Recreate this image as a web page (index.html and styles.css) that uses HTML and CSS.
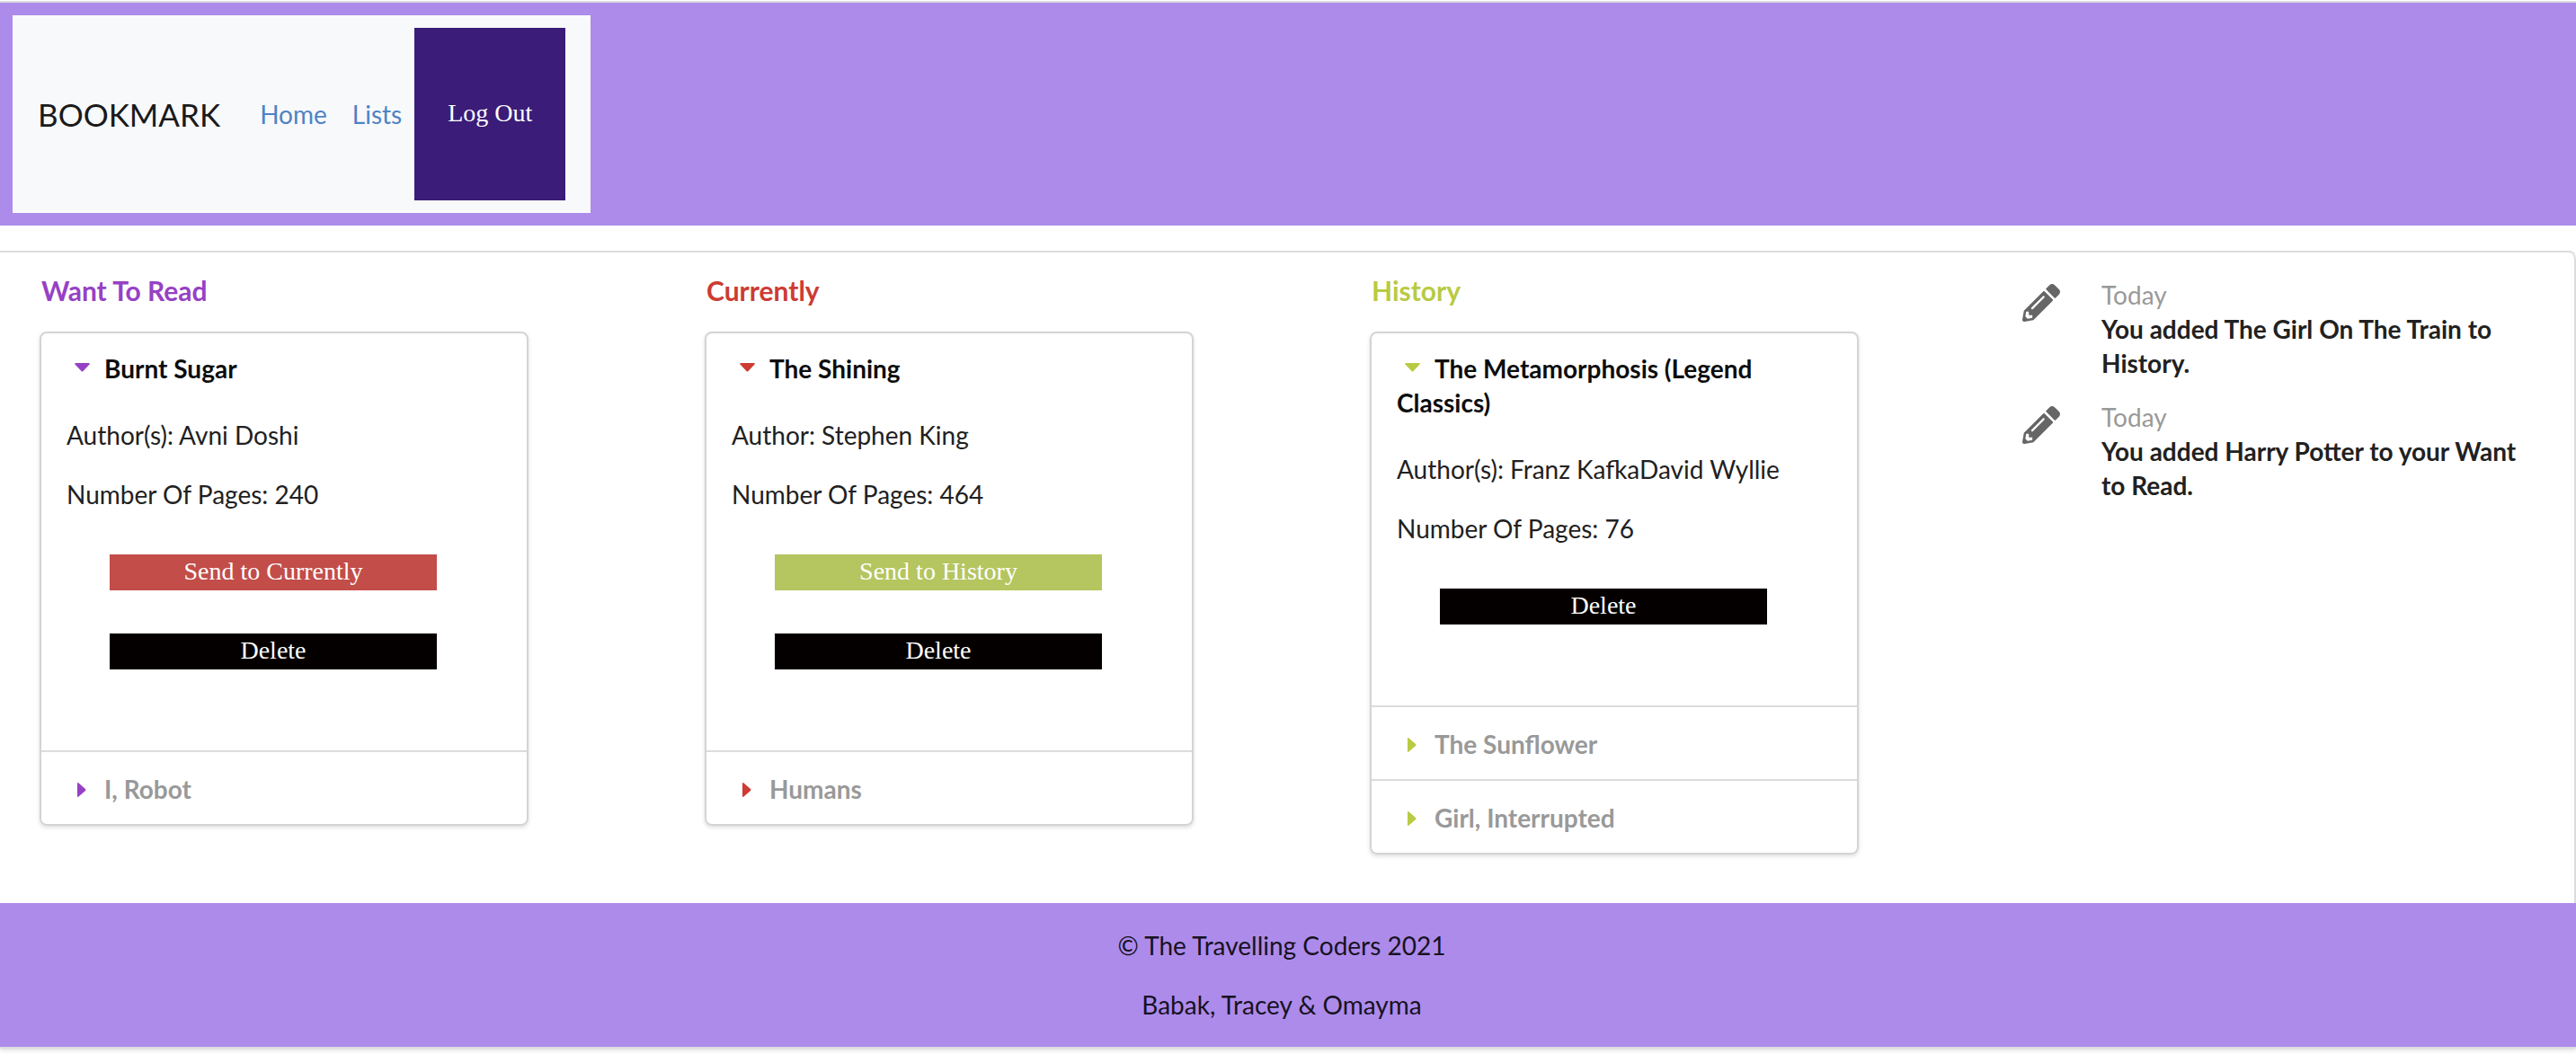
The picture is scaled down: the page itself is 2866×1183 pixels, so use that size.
FILE: index.html
```html
<!DOCTYPE html>
<html lang="en">
<head>
  <meta charset="utf-8">
  <meta name="viewport" content="width=device-width, initial-scale=1">
  <title>Bookmark</title>
  <link rel="stylesheet" href="styles.css">
</head>
<body>
  <header class="site-header">
    <nav class="navbar">
      <span class="brand">BOOKMARK</span>
      <a class="nav-link" href="#home">Home</a>
      <a class="nav-link" href="#lists">Lists</a>
      <button class="logout" type="button">Log Out</button>
    </nav>
  </header>

  <div class="page">
    <main class="content">
      <div class="lists">
        <section class="list list-want">
          <h2 class="list-heading">Want To Read</h2>
          <div class="accordion">
            <details class="book" open>
              <summary class="book-title"><svg class="caret" viewBox="0 0 35 20" aria-hidden="true"><path d="M10 3h15q1.500 0 .5 1.500l-7 7.500q-1 1-2 0l-7-7.500q-1-1.500.5-1.500z"/></svg>Burnt Sugar</summary>
              <div class="book-body">
                <p>Author(s): Avni Doshi</p>
                <p>Number Of Pages: 240</p>
                <button class="action action-currently" type="button">Send to Currently</button>
                <button class="action action-delete" type="button">Delete</button>
              </div>
            </details>
            <details class="book">
              <summary class="book-title"><svg class="caret" viewBox="0 0 35 20" aria-hidden="true"><path d="M12 3v14q0 1.500 1.500.5l7.500-6.500q1-1 0-2l-7.500-6.500q-1.500-1-1.500.5z"/></svg>I, Robot</summary>
            </details>
          </div>
        </section>

        <section class="list list-currently">
          <h2 class="list-heading">Currently</h2>
          <div class="accordion">
            <details class="book" open>
              <summary class="book-title"><svg class="caret" viewBox="0 0 35 20" aria-hidden="true"><path d="M10 3h15q1.500 0 .5 1.500l-7 7.500q-1 1-2 0l-7-7.500q-1-1.500.5-1.500z"/></svg>The Shining</summary>
              <div class="book-body">
                <p>Author: Stephen King</p>
                <p>Number Of Pages: 464</p>
                <button class="action action-history" type="button">Send to History</button>
                <button class="action action-delete" type="button">Delete</button>
              </div>
            </details>
            <details class="book">
              <summary class="book-title"><svg class="caret" viewBox="0 0 35 20" aria-hidden="true"><path d="M12 3v14q0 1.500 1.500.5l7.500-6.500q1-1 0-2l-7.500-6.500q-1.500-1-1.500.5z"/></svg>Humans</summary>
            </details>
          </div>
        </section>

        <section class="list list-history">
          <h2 class="list-heading">History</h2>
          <div class="accordion">
            <details class="book" open>
              <summary class="book-title"><svg class="caret" viewBox="0 0 35 20" aria-hidden="true"><path d="M10 3h15q1.500 0 .5 1.500l-7 7.500q-1 1-2 0l-7-7.500q-1-1.500.5-1.500z"/></svg>The Metamorphosis (Legend Classics)</summary>
              <div class="book-body">
                <p>Author(s): Franz KafkaDavid Wyllie</p>
                <p>Number Of Pages: 76</p>
                <button class="action action-delete" type="button">Delete</button>
              </div>
            </details>
            <details class="book">
              <summary class="book-title"><svg class="caret" viewBox="0 0 35 20" aria-hidden="true"><path d="M12 3v14q0 1.500 1.500.5l7.500-6.500q1-1 0-2l-7.500-6.500q-1.500-1-1.500.5z"/></svg>The Sunflower</summary>
            </details>
            <details class="book">
              <summary class="book-title"><svg class="caret" viewBox="0 0 35 20" aria-hidden="true"><path d="M12 3v14q0 1.500 1.500.5l7.500-6.500q1-1 0-2l-7.500-6.500q-1.500-1-1.500.5z"/></svg>Girl, Interrupted</summary>
            </details>
          </div>
        </section>
      </div>

      <aside class="feed">
        <article class="event">
          <svg class="pencil" viewBox="0 0 512 512" aria-hidden="true"><path d="M497.900 142.100l-46.100 46.100c-4.700 4.700-12.300 4.700-17 0l-111-111c-4.700-4.700-4.700-12.300 0-17l46.100-46.100c18.700-18.700 49.100-18.700 67.900 0l60.100 60.100c18.800 18.700 18.800 49.100 0 67.900zM284.200 99.800L21.600 362.400.4 483.900c-2.900 16.400 11.400 30.600 27.800 27.800l121.500-21.300 262.600-262.600c4.700-4.700 4.700-12.300 0-17l-111-111c-4.800-4.700-12.400-4.700-17.100 0zM124.100 339.900c-5.500-5.500-5.500-14.300 0-19.800l154-154c5.500-5.500 14.300-5.500 19.800 0s5.500 14.300 0 19.800l-154 154c-5.500 5.500-14.300 5.500-19.800 0zM88 424h48v36.300l-64.500 11.300-31.100-31.100L51.700 376H88v48z"/></svg>
          <div class="event-text">
            <time class="event-date">Today</time>
            <p class="event-summary">You added The Girl On The Train to History.</p>
          </div>
        </article>
        <article class="event">
          <svg class="pencil" viewBox="0 0 512 512" aria-hidden="true"><path d="M497.900 142.100l-46.100 46.100c-4.700 4.700-12.300 4.700-17 0l-111-111c-4.700-4.700-4.700-12.300 0-17l46.100-46.100c18.700-18.700 49.100-18.700 67.900 0l60.100 60.100c18.800 18.700 18.800 49.100 0 67.900zM284.200 99.800L21.600 362.400.4 483.900c-2.900 16.400 11.400 30.600 27.800 27.800l121.500-21.300 262.600-262.600c4.700-4.700 4.700-12.300 0-17l-111-111c-4.800-4.700-12.400-4.700-17.100 0zM124.100 339.900c-5.500-5.500-5.500-14.300 0-19.800l154-154c5.500-5.500 14.300-5.500 19.800 0s5.500 14.300 0 19.800l-154 154c-5.500 5.500-14.300 5.500-19.800 0zM88 424h48v36.300l-64.500 11.300-31.100-31.100L51.700 376H88v48z"/></svg>
          <div class="event-text">
            <time class="event-date">Today</time>
            <p class="event-summary">You added Harry Potter to your Want to Read.</p>
          </div>
        </article>
      </aside>
    </main>

    <footer class="site-footer">
      <p>© The Travelling Coders 2021</p>
      <p>Babak, Tracey &amp; Omayma</p>
    </footer>
  </div>
</body>
</html>
```

FILE: styles.css
```css
* {
  box-sizing: border-box;
}

body {
  margin: 0;
  padding: 1px 0 16px;
  background: #fff;
  color: #212121;
  font-family: Lato, "Liberation Sans", sans-serif;
  font-size: 28px;
  line-height: 38px;
}

p,
h2 {
  margin: 0;
}

button {
  border: 0;
  color: #fff;
  font-family: "Liberation Serif", serif;
  font-size: 28px;
  cursor: pointer;
}

/* Header */

.site-header {
  display: flex;
  padding: 14px;
  border-top: 2px solid #dcdcdd;
  background: #ad8beb;
}

.navbar {
  display: flex;
  align-items: center;
  padding: 14px 28px;
  background: #f8f9fb;
}

.brand {
  margin-right: 30px;
  color: #1a1a1a;
  font-size: 35px;
}

.nav-link {
  padding: 14px;
  color: #4f83c4;
  text-decoration: none;
}

.logout {
  width: 168px;
  height: 192px;
  padding: 0 0 2px;
  background: #3b1c78;
}

/* Page panel */

.page {
  margin-top: 28px;
  border-top: 2px solid #dcdcdd;
  border-top-right-radius: 8px;
  box-shadow: 0 2px 0 #dcdcdd, 0 4px 4px rgba(34, 36, 38, 0.15);
}

.content {
  display: grid;
  grid-template-columns: 2024fr 586fr;
  column-gap: 182px;
  padding: 23px 28px 54px 44px;
  border-right: 2px solid #dcdcdd;
  border-top-right-radius: 8px;
}

.lists {
  display: grid;
  grid-template-columns: repeat(3, 1fr);
  align-items: start;
  column-gap: 196px;
}

.list-heading {
  margin-bottom: 27px;
  padding-left: 2px;
  font-size: 30px;
  font-weight: 700;
}

.list-want .list-heading,
.list-want .caret {
  color: #9641c5;
}

.list-currently .list-heading,
.list-currently .caret {
  color: #cd3b33;
}

.list-history .list-heading,
.list-history .caret {
  color: #b9ca43;
}

/* Accordion of books */

.accordion {
  border: 2px solid #d4d4d5;
  border-radius: 8px;
  box-shadow: 0 2px 4px rgba(34, 36, 38, 0.15);
}

.book + .book {
  border-top: 2px solid #dcdcdd;
}

.book-title {
  display: block;
  padding: 22px 28px 20px;
  color: #999;
  font-weight: 700;
  list-style: none;
  cursor: pointer;
}

.book[open] > .book-title {
  padding: 20px 28px 22px;
  color: #0d0d0d;
}

.caret {
  width: 35px;
  height: 20px;
  margin-right: 7px;
  vertical-align: baseline;
  fill: currentColor;
}

.book-body {
  display: flex;
  flex-direction: column;
  align-items: flex-start;
  padding: 14px 28px 42px;
}

.book-body p {
  margin-bottom: 28px;
}

.action {
  width: 364px;
  max-width: 100%;
  height: 40px;
  margin: 20px 0 28px 48px;
  padding: 0 0 2px;
}

.action:last-child {
  margin-bottom: 48px;
}

.action-currently {
  background: #c24d49;
}

.action-history {
  background: #b5c55f;
}

.action-delete {
  background: #040000;
}

/* Activity feed */

.feed {
  display: flex;
  flex-direction: column;
  gap: 22px;
  padding: 5px 28px 0 0;
}

.event {
  display: flex;
  gap: 46px;
}

.pencil {
  flex: none;
  width: 42px;
  height: 42px;
  margin-top: 7px;
  fill: #666;
}

.event-date {
  display: block;
  color: #999;
}

.event-summary {
  font-weight: 700;
}

/* Footer */

.site-footer {
  display: flex;
  flex-direction: column;
  gap: 28px;
  padding: 28px 14px 28px 0;
  background: #ad8beb;
  color: #17121f;
  text-align: center;
}
```
